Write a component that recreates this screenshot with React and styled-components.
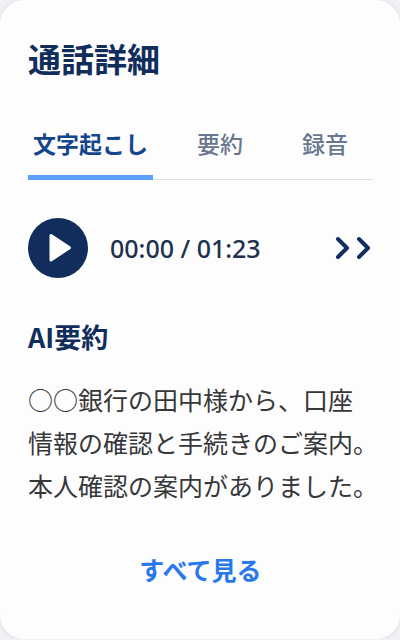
import React, { useState } from "react";
import styled, { createGlobalStyle } from "styled-components";

const tabs = ["文字起こし", "要約", "録音"];

const App = () => {
  const [active, setActive] = useState(0);

  return (
    <>
      <GlobalStyle />
      <Card>
        <Title>通話詳細</Title>

        <TabList role="tablist">
          {tabs.map((label, index) => (
            <Tab
              key={label}
              type="button"
              role="tab"
              aria-selected={active === index}
              $active={active === index}
              onClick={() => setActive(index)}
            >
              {label}
            </Tab>
          ))}
        </TabList>

        <Player>
          <PlayButton type="button" aria-label="再生">
            <svg width="60" height="60" viewBox="0 0 60 60">
              <path
                d="M23 17.500v24.500l18.500-12.250z"
                fill="currentColor"
                stroke="currentColor"
                strokeWidth="3"
                strokeLinejoin="round"
              />
            </svg>
          </PlayButton>
          <Time>00:00 / 01:23</Time>
          <SkipButton type="button" aria-label="早送り">
            <svg width="36" height="24" viewBox="0 0 36 24">
              <path
                d="M3 3l9 9-9 9M24 3l9 9-9 9"
                fill="none"
                stroke="currentColor"
                strokeWidth="4"
                strokeLinecap="round"
                strokeLinejoin="round"
              />
            </svg>
          </SkipButton>
        </Player>

        <Heading>AI要約</Heading>
        <Summary>
          ○○銀行の田中様から、口座
          <br />
          情報の確認と手続きのご案内。
          <br />
          本人確認の案内がありました。
        </Summary>
        <MoreLink href="#all">すべて見る</MoreLink>
      </Card>
    </>
  );
};

export default App;

const GlobalStyle = createGlobalStyle`
  * {
    box-sizing: border-box;
  }

  body {
    margin: 0;
    background: #f0f2f7;
    font-family: "Noto Sans CJK JP", sans-serif;
  }

  button {
    padding: 0;
    border: 0;
    background: none;
    font-family: inherit;
    cursor: pointer;
  }
`;

const Card = styled.main`
  display: flex;
  flex-direction: column;
  min-height: calc(100vh - 1px);
  padding: 38px 27px 48px 28px;
  border-radius: 24px;
  background: #fdfdfe;
  box-shadow: 0 0 4px rgba(30, 50, 90, 0.12);
`;

const Title = styled.h1`
  margin: 0;
  font-size: 33px;
  font-weight: 700;
  line-height: 40px;
  color: #112d5b;
`;

const TabList = styled.div`
  display: grid;
  grid-template-columns: 164fr 105fr 76fr;
  justify-items: start;
  margin-top: 40px;
  box-shadow: inset 0 -1px #dbe2ee;
`;

const Tab = styled.button`
  height: 62px;
  padding: 4px 5px 11px;
  border-bottom: 5px solid ${({ $active }) => ($active ? "#5a9fff" : "transparent")};
  font-size: 23px;
  font-weight: ${({ $active }) => ($active ? "700" : "500")};
  line-height: 32px;
  color: ${({ $active }) => ($active ? "#14468c" : "#68778f")};
`;

const Player = styled.div`
  display: flex;
  align-items: center;
  margin-top: 38px;
`;

const PlayButton = styled.button`
  width: 60px;
  height: 60px;
  border-radius: 50%;
  background: #112d5c;
  color: #fff;

  svg {
    display: block;
  }
`;

const Time = styled.span`
  margin-left: 22px;
  font-family: "Noto Sans", sans-serif;
  font-size: 25px;
  font-weight: 500;
  line-height: 32px;
  color: #20304f;
`;

const SkipButton = styled.button`
  margin: 0 2px 0 auto;
  color: #112f60;

  svg {
    display: block;
  }
`;

const Heading = styled.h2`
  margin: 39px 0 0;
  font-size: 27px;
  font-weight: 700;
  line-height: 40px;
  color: #112d5b;
`;

const Summary = styled.p`
  margin: 21px -8px 0 0;
  font-size: 25px;
  line-height: 43px;
  color: #363738;
`;

const MoreLink = styled.a`
  align-self: center;
  margin-top: 42px;
  font-size: 25px;
  font-weight: 700;
  line-height: 40px;
  color: #2878ed;
  text-decoration: none;
`;
